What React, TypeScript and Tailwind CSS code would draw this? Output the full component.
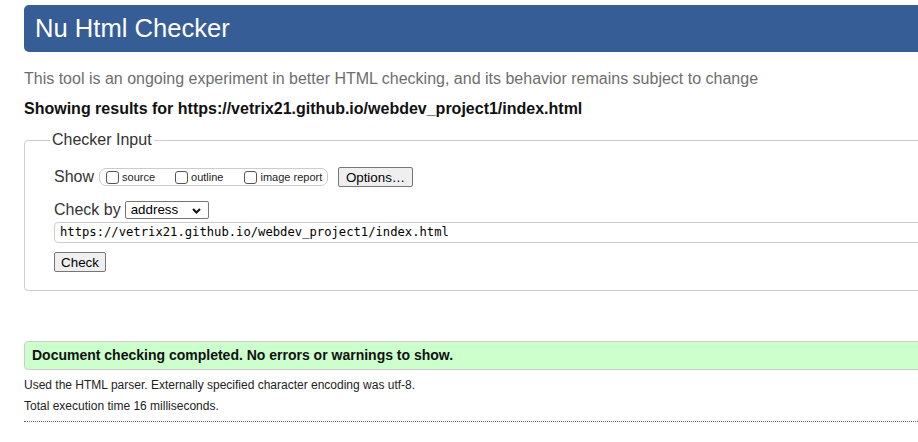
const URL = "https://vetrix21.github.io/webdev_project1/index.html";

const Chevron = () => (
  <svg width="9" height="6" viewBox="0 0 9 6" className="absolute right-[7px] top-[6px]">
    <path d="M1 1 L4.5 4.5 L8 1" fill="none" stroke="#111" strokeWidth="2" />
  </svg>
);

const Box = ({ label }: { label: string }) => (
  <label className="flex items-center">
    <span className="ml-[4px] mr-[3px] w-[13px] h-[13px] rounded-[3px] border border-[#555] bg-white" />
    <span className="text-[11px] text-[#222]">{label}</span>
  </label>
);

export default function App() {
  return (
    <div className="w-[918px] h-[442px] overflow-hidden bg-white font-['Liberation_Sans',Arial,sans-serif] text-[#222]">
      <div className="ml-[24px] w-[900px] pt-[5px]">
        <header className="h-[47px] rounded-[5px] bg-[#365d95] pl-[11px] flex items-center">
          <h1 className="text-[25.6px] text-white leading-none">Nu Html Checker</h1>
        </header>

        <p className="mt-[18px] text-[16px] leading-[18px] text-[#6e6e6e]">
          This tool is an ongoing experiment in better HTML checking, and its behavior remains subject to change
        </p>
        <p className="mt-[12px] text-[16px] leading-[18px] font-bold text-[#111]">
          Showing results for {URL}
        </p>

        <fieldset className="mt-[13px] border border-[#cccccc] rounded-[4px] pl-[25px] pt-[18px] pb-[16px]">
          <legend className="px-[2px] text-[16px] leading-[18px] text-[#333]">Checker Input</legend>
          <div className="ml-[4px]">
            <div className="h-[20px] flex items-center">
              <span className="text-[16px] text-[#333]">Show</span>
              <div className="ml-[5px] h-[18px] w-[229px] border border-[#cccccc] rounded-[7px] flex items-center pl-[2px]">
                <Box label="source" />
                <span className="w-[16px]" />
                <Box label="outline" />
                <span className="w-[17px]" />
                <Box label="image report" />
              </div>
              <button className="ml-[10px] h-[20px] w-[75px] border border-[#767676] rounded-[2px] bg-[#efefef] text-[13.33px] text-black">
                Options…
              </button>
            </div>

            <div className="mt-[13px] h-[20px] flex items-center">
              <span className="text-[16px] text-[#333]">Check by</span>
              <div className="relative ml-[4px] h-[18px] w-[84px] border border-[#767676] rounded-[2px] bg-white">
                <span className="absolute left-[5px] top-[0px] text-[13.33px] leading-[16px] text-black">address</span>
                <Chevron />
              </div>
            </div>

            <div className="mt-[2px] h-[21px] border border-[#cccccc] rounded-[4px] pl-[5px] flex items-center font-['DejaVu_Sans_Mono',monospace] text-[12.2px] text-black">
              {URL}
            </div>

            <button className="mt-[9px] h-[20px] w-[52px] border border-[#767676] rounded-[2px] bg-[#efefef] text-[13.33px] text-black">
              Check
            </button>
          </div>
        </fieldset>

        <div className="mt-[50px] h-[29px] border border-[#cccccc] rounded-[4px] bg-[#ccffcc] pl-[7px] flex items-center">
          <p className="text-[14px] font-bold text-[#111]">Document checking completed. No errors or warnings to show.</p>
        </div>

        <p className="mt-[7px] text-[12px] leading-[16px] text-[#222]">
          Used the HTML parser. Externally specified character encoding was utf-8.
        </p>
        <p className="mt-[5px] text-[12px] leading-[16px] text-[#222]">Total execution time 16 milliseconds.</p>
        <div className="mt-[7px] border-t border-dotted border-[#666]" />
      </div>
    </div>
  );
}
